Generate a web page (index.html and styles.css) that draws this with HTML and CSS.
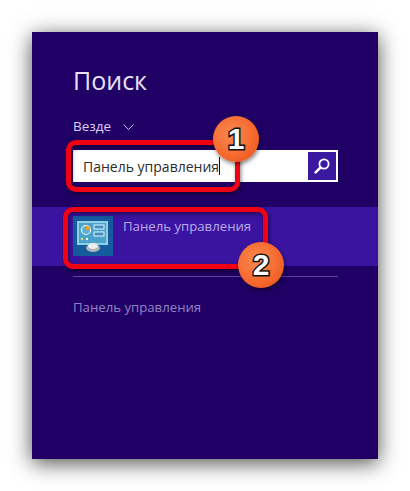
FILE: index.html
```html
<!DOCTYPE html>
<html lang="ru">
<head>
<meta charset="utf-8">
<title>Поиск</title>
<link rel="stylesheet" href="styles.css">
</head>
<body>
<main class="panel">
  <h1 class="title">Поиск</h1>
  <div class="scope">
    <span>Везде</span>
    <svg class="chevron" viewBox="0 0 11 6" width="11" height="6"><path d="M.5.5 5.5 5.5 10.5.5" fill="none" stroke="#cdbdf0" stroke-width="1"/></svg>
  </div>
  <div class="search">
    <div class="query"><span>Панель управления</span><i class="caret"></i></div>
    <div class="search-btn">
      <svg viewBox="0 0 18 18" width="18" height="18"><circle cx="11" cy="7" r="4.6" fill="none" stroke="#fff" stroke-width="1.8"/><path d="M7.6 10.4 2.6 15.4" stroke="#fff" stroke-width="2.6" stroke-linecap="round"/></svg>
    </div>
  </div>
  <div class="result">
    <div class="tile">
      <svg viewBox="0 0 40 40" width="40" height="40">
        <rect width="40" height="40" fill="#145a9c"/>
        <rect x="4" y="5" width="31" height="24" fill="#8fd0e6"/>
        <rect x="6" y="7" width="27" height="20" fill="#4aa2cc"/>
        <circle cx="13" cy="14" r="4.5" fill="#5bb0d6" stroke="#eef8fb" stroke-width="1.2"/>
        <path d="M13 14V9.5A4.5 4.5 0 0 1 17.500 14Z" fill="#f0a030"/>
        <rect x="21" y="9" width="10" height="4" fill="#3f8fbd" stroke="#e6f5fa"/>
        <rect x="21" y="16" width="10" height="4" fill="#3f8fbd" stroke="#e6f5fa"/>
        <circle cx="9" cy="23" r="1.200" fill="#f3d070"/>
        <circle cx="14" cy="23" r="1.200" fill="#e8f6fa"/>
        <ellipse cx="20" cy="32" rx="7" ry="4" fill="#aeb4b8"/>
        <ellipse cx="20" cy="30" rx="5" ry="3" fill="#eceeee"/>
      </svg>
    </div>
    <span class="result-name">Панель управления</span>
  </div>
  <hr class="divider">
  <div class="section">Панель управления</div>

  <div class="ring ring-one"></div>
  <div class="ring ring-two"></div>
  <div class="badge badge-one">1</div>
  <div class="badge badge-two">2</div>
</main>
</body>
</html>
```

FILE: styles.css
```css
* { box-sizing: border-box; }
html, body { margin: 0; background: #fff; }
body { width: 410px; height: 491px; padding: 32px; overflow: hidden; }

.panel {
  position: relative;
  width: 346px;
  height: 427px;
  padding: 31px 0 0;
  display: flex;
  flex-direction: column;
  background: #200064;
  box-shadow: 0 4px 20px rgba(0, 0, 0, .7);
  font-family: "Open Sans", "Noto Sans", sans-serif;
}

.title {
  margin: 0 0 0 41px;
  font-size: 25px;
  font-weight: 400;
  line-height: 34px;
  color: #e9e0fb;
}

.scope {
  margin: 19px 0 0 41px;
  height: 20px;
  display: flex;
  align-items: center;
  gap: 12px;
  font-size: 13.5px;
  color: #dcd0f6;
}
.chevron { margin-top: 2px; }

.search {
  margin: 14px 40px 0 41px;
  height: 32px;
  padding: 2px;
  display: flex;
  justify-content: space-between;
  background: #fff;
}
.query {
  display: flex;
  align-items: center;
  padding-left: 8px;
  font-size: 14px;
  color: #2c2c2c;
}
.caret { width: 1px; height: 18px; background: #111; }
.search-btn {
  width: 28px;
  height: 28px;
  display: flex;
  align-items: center;
  justify-content: center;
  background: #3a18a0;
}

.result {
  margin-top: 25px;
  height: 59px;
  padding: 9px 0 0 41px;
  display: flex;
  align-items: flex-start;
  gap: 10px;
  background: #3a14a0;
}
.tile { width: 40px; height: 40px; line-height: 0; }
.result-name {
  font-size: 13.2px;
  line-height: 18px;
  margin-top: 1px;
  color: #bcaae8;
}

.divider {
  margin: 10px 40px 0 41px;
  height: 1px;
  border: 0;
  background: #5a45a0;
}
.section {
  margin: 21px 0 0 41px;
  font-size: 13.2px;
  line-height: 18px;
  color: #9482c8;
}

.ring {
  position: absolute;
  border: 5px solid #f00012;
  border-radius: 10px;
  box-shadow: 1px 2px 4px rgba(0, 0, 0, .5), inset 1px 2px 4px rgba(0, 0, 0, .45);
}
.ring-one { left: 34px; top: 108px; width: 174px; height: 52px; }
.ring-two { left: 31px; top: 175px; width: 205px; height: 62px; }

.badge {
  position: absolute;
  width: 46px;
  height: 46px;
  display: flex;
  align-items: center;
  justify-content: center;
  border-radius: 50%;
  background: radial-gradient(circle at 40% 40%, #fa8a50 0%, #f56a30 55%, #e84a10 100%);
  box-shadow: 1px 2px 4px rgba(0, 0, 0, .5);
  font-family: "Liberation Sans", Arial, sans-serif;
  font-size: 30px;
  font-weight: 700;
  color: #fff;
  -webkit-text-stroke: 3px #111;
  paint-order: stroke fill;
}
.badge-one { left: 181px; top: 84px; }
.badge-two { left: 206px; top: 210px; }
```
